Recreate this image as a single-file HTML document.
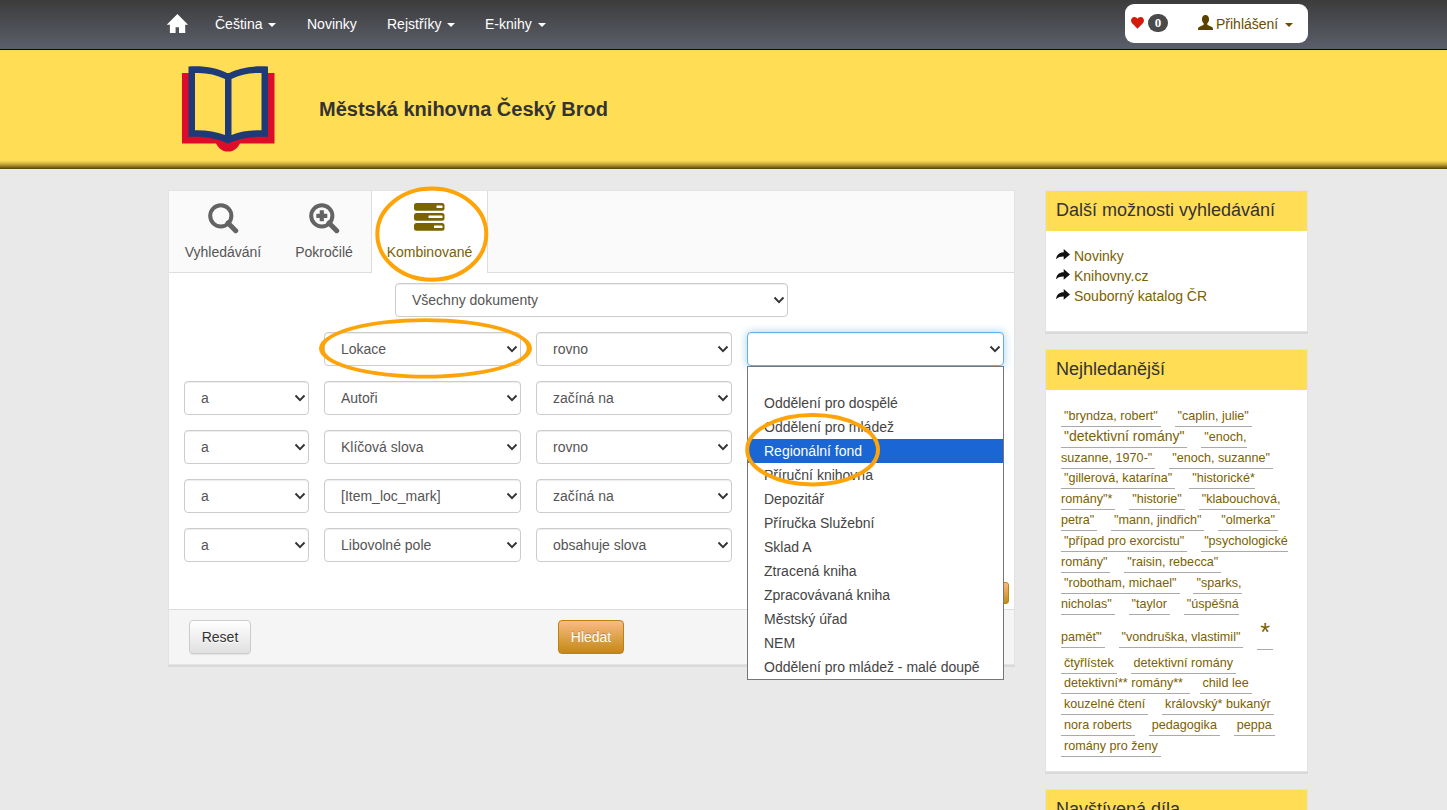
<!DOCTYPE html>
<html lang="cs">
<head>
<meta charset="utf-8">
<title>Městská knihovna Český Brod</title>
<style>
*{box-sizing:border-box;}
html,body{margin:0;padding:0;}
body{width:1447px;height:810px;overflow:hidden;background:#e9e9e9;font-family:"Liberation Sans",sans-serif;font-size:14px;line-height:20px;color:#333;position:relative;}
.abs{position:absolute;}
/* NAVBAR */
#nav{left:0;top:0;width:1447px;height:50px;background:linear-gradient(to bottom,#3c3c3c 0%,#5b5f6a 100%);border-bottom:1px solid #080808;}
#nav .it{position:absolute;top:14px;color:#fff;font-size:14px;line-height:20px;white-space:nowrap;}
.caret{display:inline-block;width:0;height:0;margin-left:2px;vertical-align:middle;border-top:4px solid;border-right:4px solid transparent;border-left:4px solid transparent;}
#login{left:1125px;top:4px;width:183px;height:39px;background:#fff;border-radius:9px;}
/* HEADER */
#hdr{left:0;top:50px;width:1447px;height:119px;background:#ffdd55;}
#title{left:319px;top:96px;font-size:20px;line-height:26px;font-weight:bold;color:#333;white-space:nowrap;}
/* MAIN PANEL */
#main{left:168px;top:190px;width:847px;height:475px;background:#fff;border:1px solid #e3e3e3;box-shadow:0 2px 0 #d9d9d9;}
#tabs{left:0;top:0;width:845px;height:82px;background:#fafafa;border-bottom:1px solid #ddd;}
.tab{position:absolute;top:0;height:82px;text-align:center;color:#555;font-size:14px;}
.tab .lbl{position:absolute;left:0;right:0;top:51px;line-height:20px;white-space:nowrap;}
#tab3{left:202px;width:117px;background:#fff;border-left:1px solid #ddd;border-right:1px solid #ddd;color:#7b6100;height:82px;}
.sel{position:absolute;height:34px;border:1px solid #ccc;border-radius:4px;background:#fff;color:#555;font-size:14px;line-height:32px;padding-left:16px;white-space:nowrap;box-shadow:inset 0 1px 1px rgba(0,0,0,.075);}
.sel svg{position:absolute;right:2px;top:12px;}
#foot{left:0;top:418px;width:845px;height:55px;background:#f5f5f5;border-top:1px solid #ddd;}
.btn{position:absolute;height:34px;border-radius:4px;font-size:14px;line-height:32px;text-align:center;}
/* dropdown */
#dd{left:747px;top:366px;width:257px;height:314px;background:#fff;border:1px solid #767676;}
#dd div{height:24px;line-height:24px;padding-left:16px;color:#444;font-size:14px;white-space:nowrap;}
#dd div.hl{background:#1a66d4;color:#fff;}
/* SIDEBAR */
.side{position:absolute;left:1045px;width:263px;background:#fff;border:1px solid #e3e3e3;box-shadow:0 2px 0 #d9d9d9;}
.side .hd{height:40px;background:#ffdd55;font-size:18px;line-height:20px;padding:9px 10px 0 10px;color:#333;white-space:nowrap;}
a{color:#7a6400;text-decoration:none;}
.lk{position:absolute;left:0;padding-left:28px;font-size:14px;line-height:20px;color:#7b6100;white-space:nowrap;}
#cloud{position:absolute;left:15px;top:0;width:240px;font-size:14px;line-height:21px;white-space:nowrap;color:#7b6100;}
.ln{position:absolute;left:0;height:21px;line-height:21px;white-space:nowrap;}
#cloud a.t{font-size:12.6px;padding:3px;margin-right:10px;border-bottom:1px solid #aaa;color:#7b6100;}
#cloud a.c{padding-left:0;}
#cloud a.o{padding-right:0;margin-right:0;}
#cloud a.b{font-size:14px;}
#cloud a.x{font-size:25.2px;line-height:10px;}
</style>
</head>
<body>

<!-- NAVBAR -->
<div id="nav" class="abs">
  <svg class="abs" style="left:160px;top:5px" width="40" height="40" viewBox="160 5 40 40"><path d="M177.4 13.9 L166.7 24.7 H169.9 V33 H175.6 V27.2 H179 V33 H185.2 V24.7 H188.1 Z" fill="#fff"/></svg>
  <span class="it" style="left:215px">Čeština <span class="caret"></span></span>
  <span class="it" style="left:307px">Novinky</span>
  <span class="it" style="left:387px">Rejstříky <span class="caret"></span></span>
  <span class="it" style="left:485px">E-knihy <span class="caret"></span></span>
</div>
<div id="login" class="abs">
  <svg class="abs" style="left:6px;top:12px" width="13" height="13" viewBox="0 -0.700 13 13"><path d="M6.5 12 L0.9 6.3 C-0.6 4.600 -0.100 1.400 2.200 0.500 C3.900 -0.200 5.600 0.600 6.500 2.100 C7.400 0.600 9.100 -0.200 10.800 0.500 C13.100 1.400 13.600 4.600 12.100 6.300 Z" fill="#d41a0a"/></svg>
  <span class="abs" style="left:23px;top:10px;width:20px;height:18px;border-radius:9px;background:#4a4a4a;color:#fff;font:bold 13px/18px 'Liberation Serif',serif;text-align:center">0</span>
  <svg class="abs" style="left:73px;top:11px" width="15" height="15" viewBox="0 0 14 14"><path d="M7 0 C9.200 0 10.300 1.700 10.300 3.900 C10.300 5.700 9.500 7.200 8.600 7.900 C8.600 8.700 8.700 9.200 9.500 9.600 L13 11.200 C13.700 11.600 14 12.200 14 13 V14 H0 V13 C0 12.200 0.300 11.600 1 11.200 L4.500 9.600 C5.300 9.200 5.400 8.700 5.400 7.900 C4.500 7.200 3.700 5.700 3.700 3.900 C3.700 1.700 4.800 0 7 0 Z" fill="#5c4200"/></svg>
  <span class="abs" style="left:91px;top:10px;font-size:14px;line-height:20px;color:#6b4c00;white-space:nowrap">Přihlášení <span class="caret" style="margin-left:3px"></span></span>
</div>

<!-- HEADER -->
<div id="hdr" class="abs"><div class="abs" style="left:0;top:110px;width:1447px;height:9px;background:linear-gradient(to bottom,rgba(84,64,0,0) 0%,rgba(84,64,0,.12) 22%,rgba(84,64,0,.38) 50%,rgba(84,64,0,.72) 78%,rgba(78,58,0,.97) 100%)"></div></div>
<svg class="abs" style="left:175px;top:60px" width="110" height="100" viewBox="175 60 110 100">
  <rect x="182" y="73" width="92.5" height="70.5" fill="#de0c2b"/>
  <circle cx="228" cy="139" r="12.6" fill="#de0c2b"/>
  <path d="M188.5 66.5 C204 65.5 217 68 228 73.5 C239 68 252 65.5 268 66.5 V137 C252 136 239 138.5 228 143.5 C217 138.5 204 136 188.5 137 Z" fill="#1f3b77"/>
  <path d="M195 73 C206 72.5 216 74.5 225 79 V135 C216 131.500 206 130 195 130.3 Z" fill="#ffdd55"/>
  <path d="M261.500 73 C250.500 72.5 240.500 74.5 231.500 79 V135 C240.500 131.500 250.500 130 261.500 130.3 Z" fill="#ffdd55"/>
</svg>
<div id="title" class="abs">Městská knihovna Český Brod</div>

<!-- MAIN -->
<div id="main" class="abs">
  <div id="tabs" class="abs">
    <div class="tab" style="left:0;width:108px">
      <svg class="abs" style="left:38px;top:11px" width="32" height="32" viewBox="0 0 32 32"><circle cx="13.8" cy="13.8" r="10.6" fill="none" stroke="#636363" stroke-width="4"/><path d="M21 21 L28.700 28.700" stroke="#636363" stroke-width="5" stroke-linecap="round"/></svg>
      <span class="lbl">Vyhledávání</span>
    </div>
    <div class="tab" style="left:108px;width:94px">
      <svg class="abs" style="left:31px;top:11px" width="32" height="32" viewBox="0 0 32 32"><circle cx="13.8" cy="13.8" r="10.6" fill="none" stroke="#636363" stroke-width="4"/><path d="M21 21 L28.700 28.700" stroke="#636363" stroke-width="5" stroke-linecap="round"/><path d="M13.8 8.300 V19.300 M8.300 13.8 H19.300" stroke="#636363" stroke-width="4.2"/></svg>
      <span class="lbl">Pokročilé</span>
    </div>
    <div class="tab" id="tab3">
      <svg class="abs" style="left:42px;top:12px" width="31" height="28" viewBox="0 0 31 28">
        <rect x="0" y="0" width="30.500" height="7.700" rx="2.500" fill="#7a6400"/><rect x="22.500" y="2.600" width="6" height="2.500" rx="0.500" fill="#fff"/>
        <rect x="0" y="10" width="30.500" height="7.700" rx="2.500" fill="#7a6400"/><rect x="14.500" y="12.600" width="14" height="2.500" rx="0.500" fill="#fff"/>
        <rect x="0" y="20" width="30.500" height="7.700" rx="2.500" fill="#7a6400"/><rect x="20" y="22.600" width="8.500" height="2.500" rx="0.500" fill="#fff"/>
      </svg>
      <span class="lbl">Kombinované</span>
    </div>
  </div>
  <div class="abs" style="left:203px;top:82px;width:115px;height:1px;background:#fff"></div>
  <div class="sel" style="left:226px;top:92px;width:393px">Všechny dokumenty <svg width="12" height="8" viewBox="0 0 12 8"><path d="M1.5 1.5 L6 6.200 L10.5 1.5" fill="none" stroke="#333" stroke-width="1.9"/></svg></div>

  <div class="sel" style="left:155px;top:141px;width:197px">Lokace <svg width="12" height="8" viewBox="0 0 12 8"><path d="M1.5 1.5 L6 6.200 L10.5 1.5" fill="none" stroke="#333" stroke-width="1.9"/></svg></div>
  <div class="sel" style="left:367px;top:141px;width:196px">rovno <svg width="12" height="8" viewBox="0 0 12 8"><path d="M1.5 1.5 L6 6.200 L10.5 1.5" fill="none" stroke="#333" stroke-width="1.9"/></svg></div>
  <div class="sel" id="val" style="left:578px;top:141px;width:257px;border-color:#66afe9;box-shadow:inset 0 1px 1px rgba(0,0,0,.075),0 0 8px rgba(102,175,233,.6)">&nbsp;<svg width="12" height="8" viewBox="0 0 12 8"><path d="M1.5 1.5 L6 6.200 L10.5 1.5" fill="none" stroke="#333" stroke-width="1.9"/></svg></div>

  <div class="sel" style="left:15px;top:190px;width:125px">a <svg width="12" height="8" viewBox="0 0 12 8"><path d="M1.5 1.5 L6 6.200 L10.5 1.5" fill="none" stroke="#333" stroke-width="1.9"/></svg></div>
  <div class="sel" style="left:155px;top:190px;width:197px">Autoři <svg width="12" height="8" viewBox="0 0 12 8"><path d="M1.5 1.5 L6 6.200 L10.5 1.5" fill="none" stroke="#333" stroke-width="1.9"/></svg></div>
  <div class="sel" style="left:367px;top:190px;width:196px">začíná na <svg width="12" height="8" viewBox="0 0 12 8"><path d="M1.5 1.5 L6 6.200 L10.5 1.5" fill="none" stroke="#333" stroke-width="1.9"/></svg></div>

  <div class="sel" style="left:15px;top:239px;width:125px">a <svg width="12" height="8" viewBox="0 0 12 8"><path d="M1.5 1.5 L6 6.200 L10.5 1.5" fill="none" stroke="#333" stroke-width="1.9"/></svg></div>
  <div class="sel" style="left:155px;top:239px;width:197px">Klíčová slova <svg width="12" height="8" viewBox="0 0 12 8"><path d="M1.5 1.5 L6 6.200 L10.5 1.5" fill="none" stroke="#333" stroke-width="1.9"/></svg></div>
  <div class="sel" style="left:367px;top:239px;width:196px">rovno <svg width="12" height="8" viewBox="0 0 12 8"><path d="M1.5 1.5 L6 6.200 L10.5 1.5" fill="none" stroke="#333" stroke-width="1.9"/></svg></div>

  <div class="sel" style="left:15px;top:288px;width:125px">a <svg width="12" height="8" viewBox="0 0 12 8"><path d="M1.5 1.5 L6 6.200 L10.5 1.5" fill="none" stroke="#333" stroke-width="1.9"/></svg></div>
  <div class="sel" style="left:155px;top:288px;width:197px">[Item_loc_mark] <svg width="12" height="8" viewBox="0 0 12 8"><path d="M1.5 1.5 L6 6.200 L10.5 1.5" fill="none" stroke="#333" stroke-width="1.9"/></svg></div>
  <div class="sel" style="left:367px;top:288px;width:196px">začíná na <svg width="12" height="8" viewBox="0 0 12 8"><path d="M1.5 1.5 L6 6.200 L10.5 1.5" fill="none" stroke="#333" stroke-width="1.9"/></svg></div>

  <div class="sel" style="left:15px;top:337px;width:125px">a <svg width="12" height="8" viewBox="0 0 12 8"><path d="M1.5 1.5 L6 6.200 L10.5 1.5" fill="none" stroke="#333" stroke-width="1.9"/></svg></div>
  <div class="sel" style="left:155px;top:337px;width:197px">Libovolné pole <svg width="12" height="8" viewBox="0 0 12 8"><path d="M1.5 1.5 L6 6.200 L10.5 1.5" fill="none" stroke="#333" stroke-width="1.9"/></svg></div>
  <div class="sel" style="left:367px;top:337px;width:196px">obsahuje slova <svg width="12" height="8" viewBox="0 0 12 8"><path d="M1.5 1.5 L6 6.200 L10.5 1.5" fill="none" stroke="#333" stroke-width="1.9"/></svg></div>

  <div class="abs" style="left:816px;top:391px;width:24px;height:22px;border-radius:3px;border:1px solid #b8830f;background:linear-gradient(#fbba84,#c28a14)"></div>
  <div id="foot" class="abs">
    <div class="btn" style="left:20px;top:10px;width:62px;border:1px solid #ccc;color:#333;background:linear-gradient(#fff,#e0e0e0);text-shadow:0 1px 0 #fff;box-shadow:0 1px 1px rgba(0,0,0,.075);">Reset</div>
    <div class="btn" style="left:389px;top:10px;width:66px;border:1px solid #b8830f;color:#fff;background:linear-gradient(#fbba84,#c28a14);text-shadow:0 -1px 0 rgba(0,0,0,.2)">Hledat</div>
  </div>
</div>

<!-- SIDEBAR -->
<div class="side" style="top:190px;height:142px"><div class="hd">Další možnosti vyhledávání</div>
<div class="lk" style="top:55px"><svg width="14" height="11" viewBox="0 0 14 11" style="position:absolute;left:10px;top:3px"><path d="M7.700 0 L14 5.400 L7.700 10.800 V7.500 C4.600 7.400 2.300 8 0.100 10.300 C0.400 5.800 3.400 3.200 7.700 3.200 Z" fill="#111"/></svg>Novinky</div>
<div class="lk" style="top:75px"><svg width="14" height="11" viewBox="0 0 14 11" style="position:absolute;left:10px;top:3px"><path d="M7.700 0 L14 5.400 L7.700 10.800 V7.500 C4.600 7.400 2.300 8 0.100 10.300 C0.400 5.800 3.400 3.200 7.700 3.200 Z" fill="#111"/></svg>Knihovny.cz</div>
<div class="lk" style="top:95px"><svg width="14" height="11" viewBox="0 0 14 11" style="position:absolute;left:10px;top:3px"><path d="M7.700 0 L14 5.400 L7.700 10.800 V7.500 C4.600 7.400 2.300 8 0.100 10.300 C0.400 5.800 3.400 3.200 7.700 3.200 Z" fill="#111"/></svg>Souborný katalog ČR</div>
</div>
<div class="side" style="top:349px;height:423px"><div class="hd">Nejhledanější</div>
<div id="cloud">
<div class="ln" style="top:55px"><a class="t">"bryndza, robert"</a> <a class="t">"caplin, julie"</a></div>
<div class="ln" style="top:76px"><a class="t b">"detektivní romány"</a> <a class="t o">"enoch,</a></div>
<div class="ln" style="top:97px"><a class="t c">suzanne, 1970-"</a> <a class="t">"enoch, suzanne"</a></div>
<div class="ln" style="top:117px"><a class="t">"gillerová, katarína"</a> <a class="t o">"historické*</a></div>
<div class="ln" style="top:138px"><a class="t c">romány"*</a> <a class="t">"historie"</a> <a class="t o">"klabouchová,</a></div>
<div class="ln" style="top:159px"><a class="t c">petra"</a> <a class="t">"mann, jindřich"</a> <a class="t">"olmerka"</a></div>
<div class="ln" style="top:180px"><a class="t">"případ pro exorcistu"</a> <a class="t o">"psychologické</a></div>
<div class="ln" style="top:201px"><a class="t c">romány"</a> <a class="t">"raisin, rebecca"</a></div>
<div class="ln" style="top:222px"><a class="t">"robotham, michael"</a> <a class="t o">"sparks,</a></div>
<div class="ln" style="top:243px"><a class="t c">nicholas"</a> <a class="t">"taylor</a> <a class="t o">"úspěšná</a></div>
<div class="ln" style="top:276px"><a class="t c">paměť"</a> <a class="t">"vondruška, vlastimil"</a> <a class="t x">*</a></div>
<div class="ln" style="top:302px"><a class="t">čtyřlístek</a> <a class="t">detektivní romány</a></div>
<div class="ln" style="top:322px"><a class="t">detektivní** romány**&nbsp;</a><a class="t">child lee</a></div>
<div class="ln" style="top:343px"><a class="t">kouzelné čtení</a> <a class="t">královský* bukanýr</a></div>
<div class="ln" style="top:364px"><a class="t">nora roberts</a> <a class="t">pedagogika</a> <a class="t">peppa</a></div>
<div class="ln" style="top:385px"><a class="t">romány pro ženy</a></div>
</div>
</div>
<div class="side" style="top:789px;height:60px"><div class="hd">Navštívená díla</div></div>

<div id="dd" class="abs">
<div>&nbsp;</div>
<div>Oddělení pro dospělé</div>
<div>Oddělení pro mládež</div>
<div class="hl">Regionální fond</div>
<div>Příruční knihovna</div>
<div>Depozitář</div>
<div>Příručka Služební</div>
<div>Sklad A</div>
<div>Ztracená kniha</div>
<div>Zpracovávaná kniha</div>
<div>Městský úřad</div>
<div>NEM</div>
<div>Oddělení pro mládež - malé doupě</div>
</div>

<svg class="abs" style="left:0;top:0;pointer-events:none" width="1447" height="810" viewBox="0 0 1447 810">
  <ellipse cx="431.8" cy="234.1" rx="54.5" ry="45.6" fill="none" stroke="#ffa408" stroke-width="4"/>
  <path fill-rule="evenodd" fill="#ffa408" d="M319 348.4 a106.5 30.1 0 1 0 213 0 a106.5 30.1 0 1 0 -213 0 Z M324.2 348.4 a101.3 26.3 0 1 0 202.6 0 a101.3 26.3 0 1 0 -202.6 0 Z"/>
  <ellipse cx="812.6" cy="449.7" rx="65.4" ry="34.7" fill="none" stroke="#ffa408" stroke-width="4"/>
</svg>
</body>
</html>
